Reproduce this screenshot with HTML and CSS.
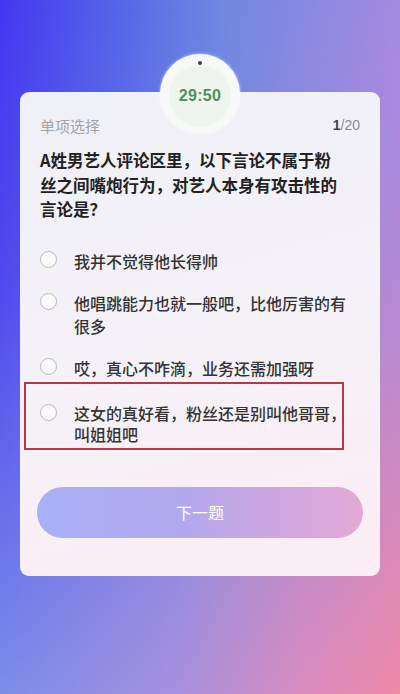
FILE: index.html
```html
<!DOCTYPE html>
<html lang="zh">
<head>
<meta charset="utf-8">
<title>答题</title>
<link rel="stylesheet" href="styles.css">
</head>
<body>
<div class="page">
  <div class="card">
    <div class="timer">
      <span class="timer-dot"></span>
      <div class="timer-inner"><span class="timer-text">29:50</span></div>
    </div>
    <div class="card-head">
      <span class="qtype">单项选择</span>
      <span class="progress"><b>1</b>/20</span>
    </div>
    <div class="question">A姓男艺人评论区里，以下言论不属于粉丝之间嘴炮行为，对艺人本身有攻击性的言论是？</div>
    <ul class="options">
      <li class="option"><span class="radio"></span><span class="opt-text">我并不觉得他长得帅</span></li>
      <li class="option"><span class="radio"></span><span class="opt-text">他唱跳能力也就一般吧，比他厉害的有很多</span></li>
      <li class="option"><span class="radio"></span><span class="opt-text">哎，真心不咋滴，业务还需加强呀</span></li>
      <li class="option option-marked"><span class="radio"></span><span class="opt-text">这女的真好看，粉丝还是别叫他哥哥，叫姐姐吧</span></li>
    </ul>
    <button class="next-btn">下一题</button>
  </div>
</div>
</body>
</html>
```

FILE: styles.css
```css
html, body {
  margin: 0;
  padding: 0;
}
body {
  width: 400px;
  height: 694px;
  overflow: hidden;
  font-family: "Noto Sans CJK SC", "Noto Sans", sans-serif;
}
.page {
  position: relative;
  width: 400px;
  height: 694px;
  box-sizing: border-box;
  padding: 92px 20px 0 20px;
  background: linear-gradient(to right, #7b8eea 0%, #a891de 45%, #d98cc0 75%, #f08aa8 100%);
}
.page::before {
  content: "";
  position: absolute;
  inset: 0;
  background: linear-gradient(to right, #4536f0 0%, #5466e8 30%, #6e88e0 55%, #a48ae2 100%);
  -webkit-mask-image: linear-gradient(to bottom, #000 0%, rgba(0,0,0,0.8) 40%, rgba(0,0,0,0) 100%);
  mask-image: linear-gradient(to bottom, #000 0%, rgba(0,0,0,0.8) 40%, rgba(0,0,0,0) 100%);
}
.card {
  position: relative;
  z-index: 1;
  height: 484px;
  box-sizing: border-box;
  padding: 23px 20px 0 20px;
  border-radius: 9px;
  background: linear-gradient(165deg, #f0f0f7 0%, #f5f2f8 50%, #fcedf4 100%);
  display: flex;
  flex-direction: column;
}
.timer {
  position: absolute;
  top: -38px;
  left: 50%;
  margin-left: -40px;
  width: 80px;
  height: 80px;
  border-radius: 50%;
  background: #f7f9f8;
  box-shadow: 0 0 3px rgba(255,255,255,0.8);
  display: flex;
  align-items: center;
  justify-content: center;
}
.timer-dot {
  position: absolute;
  top: 7px;
  left: 38px;
  width: 4px;
  height: 4px;
  border-radius: 50%;
  background: #3a3f4a;
}
.timer-inner {
  width: 62px;
  height: 62px;
  border-radius: 50%;
  background: #edf5ee;
  display: flex;
  align-items: center;
  justify-content: center;
  margin-top: 4px;
}
.timer-text {
  font-family: "Liberation Sans", "Noto Sans", sans-serif;
  font-weight: bold;
  font-size: 16px;
  color: #4f8f62;
  letter-spacing: 0.3px;
}
.card-head {
  display: flex;
  justify-content: space-between;
  align-items: center;
  height: 20px;
  font-size: 15px;
  color: #a3a3a8;
}
.progress {
  font-family: "Liberation Sans", "Noto Sans", sans-serif;
  font-size: 14px;
  color: #8a8a90;
}
.progress b {
  color: #444;
}
.question {
  margin-top: 13px;
  padding-right: 18px;
  font-size: 16.5px;
  line-height: 24.5px;
  font-weight: bold;
  color: #222;
}
.options {
  list-style: none;
  margin: 28px 0 0 0;
  padding: 0 12px 0 0;
  display: flex;
  flex-direction: column;
  gap: 19px;
}
.option {
  position: relative;
  display: flex;
  align-items: flex-start;
  gap: 17px;
  font-size: 16px;
  line-height: 23px;
  font-weight: 500;
  color: #333;
}
.option-marked {
  margin-top: 4px;
  line-height: 21px;
}
.option-marked::after {
  content: "";
  position: absolute;
  left: -16px;
  top: -21px;
  width: 320px;
  height: 68px;
  box-sizing: border-box;
  border: 2.5px solid #b8354a;
}
.radio {
  flex: none;
  width: 17px;
  height: 17px;
  box-sizing: border-box;
  border: 1.5px solid #b9b9bd;
  border-radius: 50%;
  background: #fafafa;
  margin-top: 1px;
}
.opt-text {
  flex: 1;
}
.next-btn {
  margin: 42px -3px 0 -3px;
  height: 51px;
  border: none;
  border-radius: 26px;
  background: linear-gradient(to right, #a9b1f6 0%, #b3a8ee 45%, #cfa6e0 75%, #e4aad6 100%);
  color: #ffffff;
  font-family: "Noto Sans CJK SC", "Noto Sans", sans-serif;
  font-size: 16px;
  padding: 0;
}
```
